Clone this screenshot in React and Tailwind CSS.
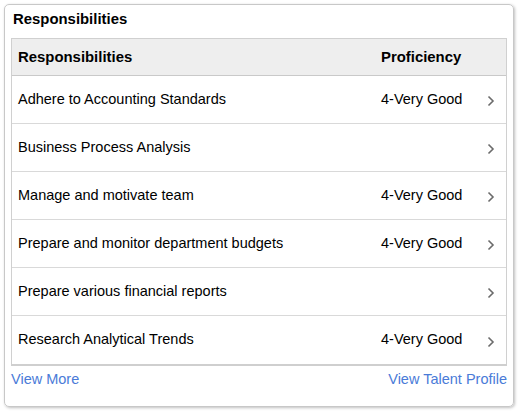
const rows = [
  { name: "Adhere to Accounting Standards", level: "4-Very Good" },
  { name: "Business Process Analysis", level: "" },
  { name: "Manage and motivate team", level: "4-Very Good" },
  { name: "Prepare and monitor department budgets", level: "4-Very Good" },
  { name: "Prepare various financial reports", level: "" },
  { name: "Research Analytical Trends", level: "4-Very Good" },
];

function Chevron() {
  return (
    <svg width="8" height="12" viewBox="0 0 8 12" fill="none">
      <path d="M1.5 1.5 L6 6 L1.5 10.5" stroke="#6b6b6b" strokeWidth="1.6" />
    </svg>
  );
}

export default function App() {
  return (
    <div className="p-[4px] bg-white font-['Liberation_Sans',Arial,sans-serif] text-[14.5px] text-black">
      <div className="w-[510px] h-[403px] border border-[#c8c8c8] rounded-[5px] shadow-[1px_1px_3px_rgba(0,0,0,0.25)] px-[6px] flex flex-col">
        <div className="pl-[2px] pt-[4px] mb-[9px] leading-[20px] font-bold text-[14.9px]">Responsibilities</div>
        <div className="border border-[#d0d0d0] border-b-2 border-b-[#cfcfcf]">
          <div className="flex items-center h-[37px] bg-[#eeeeee] border-b border-[#c9c9c9] font-bold text-[14.9px]">
            <div className="flex-1 pl-[6px]">Responsibilities</div>
            <div className="w-[125px]">Proficiency</div>
          </div>
          {rows.map((r, i) => (
            <div
              key={r.name}
              className={
                "flex items-center h-[48px] " +
                (i < rows.length - 1 ? "border-b border-[#d9d9d9]" : "")
              }
            >
              <div className="flex-1 pl-[6px]">{r.name}</div>
              <div className="w-[95px]">{r.level}</div>
              <div className="w-[30px] flex justify-center pt-[3px]">
                <Chevron />
              </div>
            </div>
          ))}
        </div>
        <div className="flex justify-between leading-[20px] pt-[3px] text-[#4a7bd8]">
          <span>View More</span>
          <span>View Talent Profile</span>
        </div>
      </div>
    </div>
  );
}
